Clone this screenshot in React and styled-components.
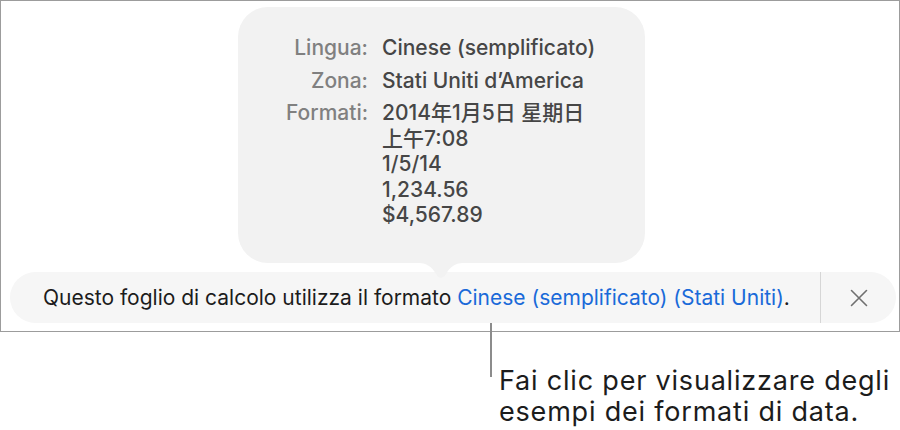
import { styled, createGlobalStyle } from "styled-components";

const GlobalStyle = createGlobalStyle`
  body {
    margin: 0;
    background: #ffffff;
    font-family: Inter, "Noto Sans CJK SC", sans-serif;
  }
`;

const Page = styled.div`
  width: 900px;
  height: 430px;
  overflow: hidden;
`;

const Frame = styled.div`
  box-sizing: border-box;
  width: 900px;
  height: 332px;
  border: 1px solid #9c9c9c;
  padding: 6px 4px 0 9px;
  display: flex;
  flex-direction: column;
`;

const Popover = styled.div`
  position: relative;
  box-sizing: border-box;
  margin-left: 228px;
  width: 407px;
  height: 256px;
  padding: 28px 0 0 48px;
  background: #f2f2f2;
  border-radius: 30px;
`;

const Tail = styled.svg`
  position: absolute;
  left: 181px;
  bottom: -18px;
`;

const InfoGrid = styled.div`
  display: grid;
  grid-template-columns: 82px auto;
  column-gap: 14px;
  row-gap: 7px;
  font-size: 21px;
  line-height: 25.5px;
  font-weight: 500;
`;

const Label = styled.div`
  text-align: right;
  color: #808080;
  white-space: nowrap;
`;

const Value = styled.div`
  color: #464646;
  white-space: pre-line;
`;

const Bar = styled.div`
  box-sizing: border-box;
  margin-top: 9px;
  height: 51px;
  width: 886px;
  border-radius: 26px;
  background: #f6f6f6;
  display: flex;
  align-items: stretch;
`;

const Message = styled.div`
  flex: 1;
  display: flex;
  align-items: center;
  padding-left: 33px;
  font-size: 21px;
  color: #1c1c1c;
  white-space: nowrap;
`;

const Link = styled.span`
  color: #1a6ad9;
  margin-left: 0.28em;
`;

const CloseButton = styled.div`
  width: 75px;
  border-left: 1px solid #d6d6d6;
  display: flex;
  align-items: center;
  justify-content: center;
`;

const Note = styled.div`
  display: flex;
  margin-left: 490px;
  margin-top: -9px;
`;

const Leader = styled.div`
  width: 2px;
  height: 54px;
  background: #8c8c8c;
`;

const Caption = styled.div`
  margin-left: 7px;
  padding-top: 42px;
  font-size: 27px;
  letter-spacing: 0.8px;
  line-height: 31px;
  color: #1c1c1c;
  white-space: nowrap;
`;

const rows = [
  ["Lingua:", "Cinese (semplificato)"],
  ["Zona:", "Stati Uniti d’America"],
  ["Formati:", "2014年1月5日 星期日\n上午7:08\n1/5/14\n1,234.56\n$4,567.89"],
];

const App = () => {
  return (
    <Page>
      <GlobalStyle />
      <Frame>
        <Popover>
          <InfoGrid>
            {rows.map(([label, value]) => [
              <Label key={label}>{label}</Label>,
              <Value key={label + "v"}>{value}</Value>,
            ])}
          </InfoGrid>
          <Tail width="44" height="18" viewBox="0 0 44 18">
            <path d="M0 0 L44 0 C36 0 31 4 27 11 C24.5 16 19.5 16 17 11 C13 4 8 0 0 0 Z" fill="#f2f2f2" />
          </Tail>
        </Popover>
        <Bar>
          <Message>
            Questo foglio di calcolo utilizza il formato
            <Link>Cinese (semplificato) (Stati Uniti)</Link>.
          </Message>
          <CloseButton>
            <svg width="18" height="18" viewBox="0 0 18 18">
              <path d="M1.5 1.5 L16.5 16.5 M16.5 1.5 L1.5 16.5" stroke="#707070" strokeWidth="1.6" strokeLinecap="round" />
            </svg>
          </CloseButton>
        </Bar>
      </Frame>
      <Note>
        <Leader />
        <Caption>
          Fai clic per visualizzare degli
          <br />
          esempi dei formati di data.
        </Caption>
      </Note>
    </Page>
  );
};

export default App;
